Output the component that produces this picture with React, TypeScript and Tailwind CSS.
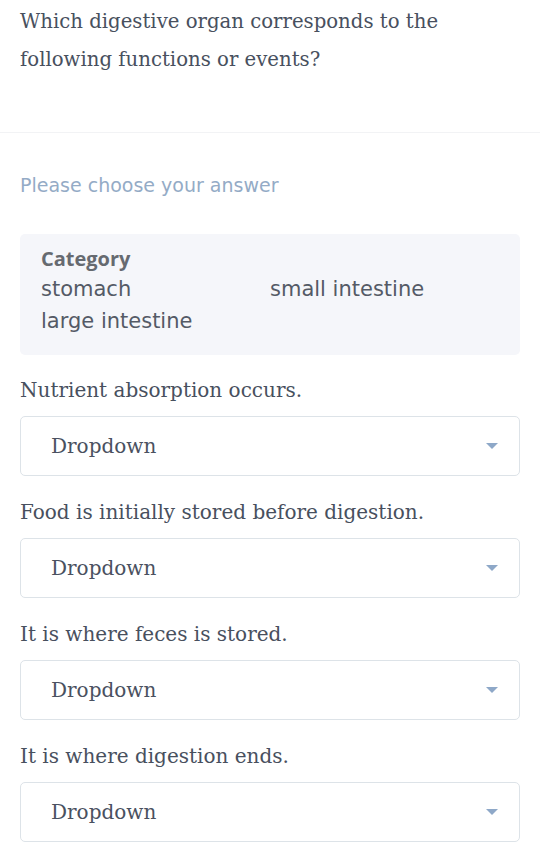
import React from 'react';

const serif = "font-['DejaVu_Serif',serif]";
const sans = "font-['DejaVu_Sans',sans-serif]";

const questions = [
  'Nutrient absorption occurs.',
  'Food is initially stored before digestion.',
  'It is where feces is stored.',
  'It is where digestion ends.',
];

const categories = ['stomach', 'small intestine', 'large intestine'];

const Dropdown: React.FC = () => (
  <div className="flex h-[60px] items-center justify-between rounded-[5px] border border-[#dde3e8] bg-white pl-[30px] pr-[21px]">
    <span className={`${serif} text-[20px] text-[#4a5160]`}>Dropdown</span>
    <svg width="12" height="6" viewBox="0 0 12 6">
      <path d="M0 0 L12 0 L6 6 Z" fill="#8ea8c8" />
    </svg>
  </div>
);

const App: React.FC = () => {
  return (
    <div className="min-h-[863px] bg-white">
      <div className="px-5 pt-[3px]">
        <h1 className={`${serif} text-[19.7px] leading-[38px] text-[#48505e]`}>
          Which digestive organ corresponds to the following functions or events?
        </h1>
      </div>
      <div className="mt-[53px] border-t border-[#f2f3f5]" />
      <div className="px-5 pb-6">
        <p className={`${sans} mt-[38px] text-[19px] leading-[28px] text-[#94abc6]`}>
          Please choose your answer
        </p>
        <div className="mt-[35px] rounded-[5px] bg-[#f5f6fa] px-[21px] pt-[11px] pb-[18px]">
          <div className="font-['Open_Sans',sans-serif] text-[20px] font-bold leading-[28px] text-[#666a70]">
            Category
          </div>
          <div className={`${sans} grid grid-cols-2 text-[21px] leading-[32px] text-[#545a66]`}>
            {categories.map((c) => (
              <div key={c}>{c}</div>
            ))}
          </div>
        </div>
        <div className="mt-[19px] flex flex-col gap-[20px]">
          {questions.map((q) => (
            <div key={q} className="flex flex-col gap-[10px]">
              <div className={`${serif} text-[20px] leading-[32px] text-[#48505e]`}>{q}</div>
              <Dropdown />
            </div>
          ))}
        </div>
      </div>
    </div>
  );
};

export default App;
